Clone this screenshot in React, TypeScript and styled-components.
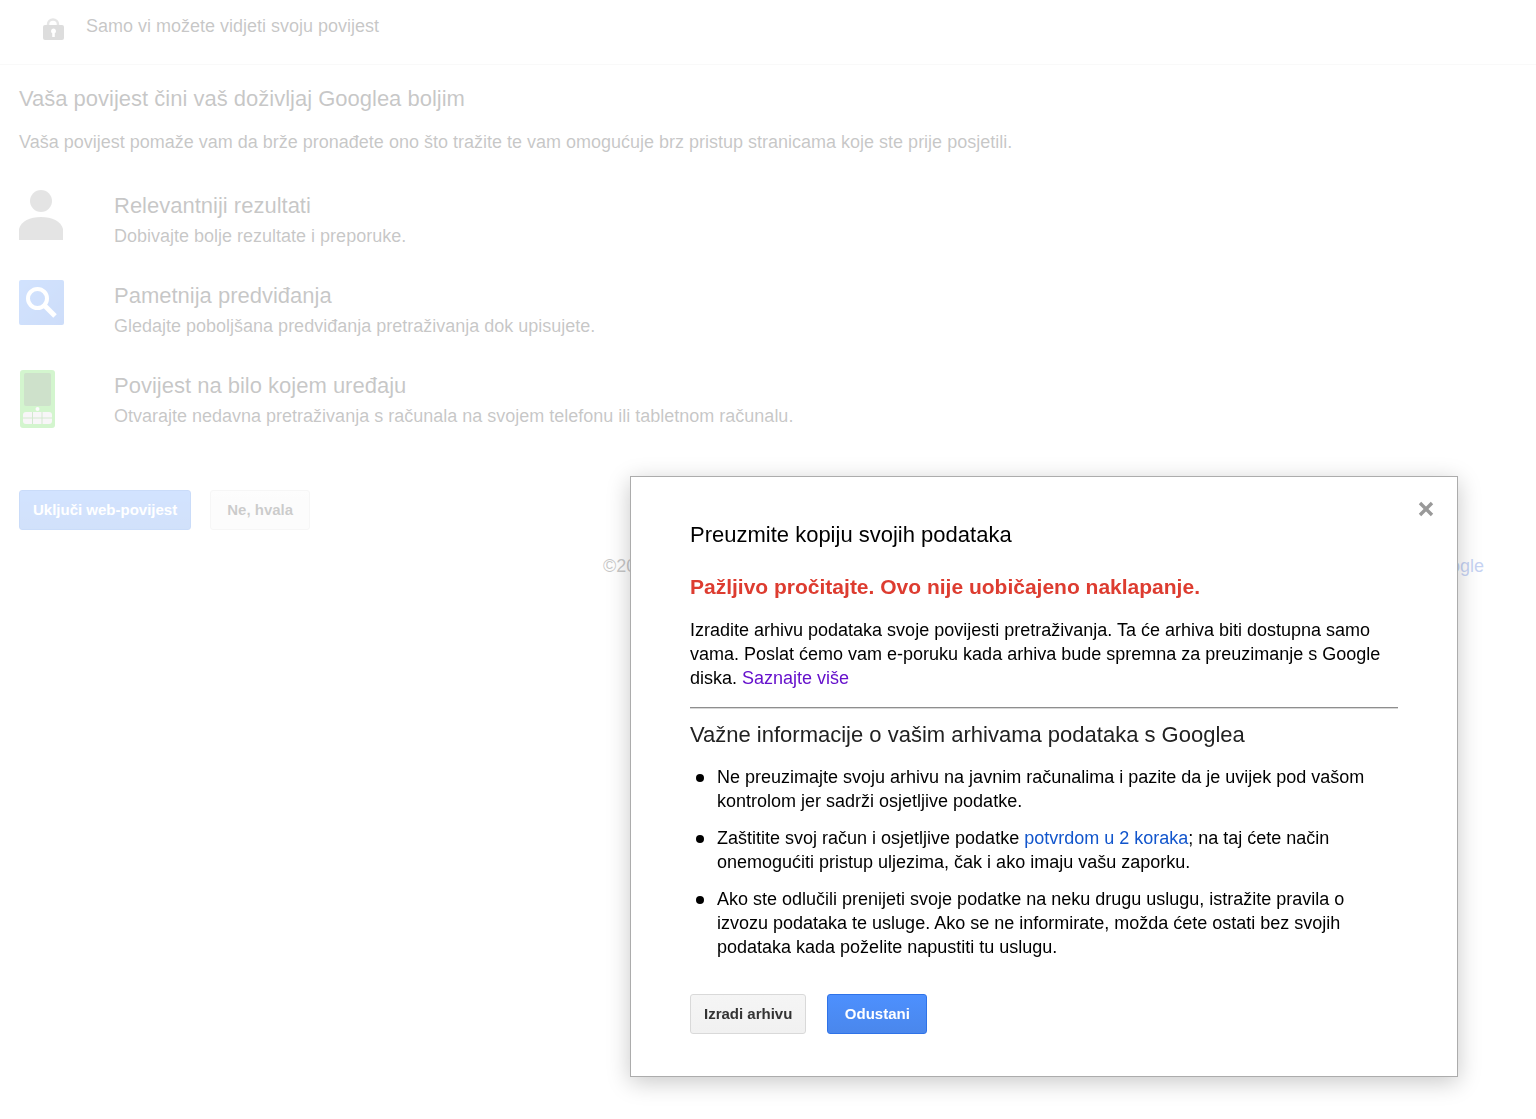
import React from "react";
import styled, { createGlobalStyle, css } from "styled-components";

const GlobalStyle = createGlobalStyle`
  *, *::before, *::after { box-sizing: border-box; }
  body {
    margin: 0;
    background: #fff;
    color: #222;
    font: 18px/24px "Liberation Sans", Arial, sans-serif;
  }
  h1, h2, h3, p, ul { margin: 0; padding: 0; font-weight: normal; }
  a { text-decoration: none; }
`;

const Page = styled.div`
  min-height: 100vh;
`;

const PrivacyBar = styled.header`
  display: flex;
  align-items: flex-start;
  gap: 22px;
  height: 65px;
  padding: 14px 42px;
  border-bottom: 1px solid #e5e5e5;
`;

const Main = styled.main`
  padding: 20px 19px 0;
`;

const Heading = styled.h1`
  font-size: 22px;
  line-height: 28px;
`;

const Intro = styled.p`
  padding: 17px 0 36px;
`;

const FeatureList = styled.ul`
  list-style: none;
`;

const Feature = styled.li`
  display: grid;
  grid-template-columns: 45px 1fr;
  column-gap: 50px;
  align-items: start;
  height: 90px;
  svg { display: block; }
`;

const FeatureTitle = styled.h2`
  font-size: 22px;
  line-height: 32px;
`;

const FeatureText = styled.p`
  line-height: 28px;
`;

const ButtonRow = styled.div<{ $gap: number; $top: number }>`
  display: flex;
  gap: ${(p) => p.$gap}px;
  margin-top: ${(p) => p.$top}px;
`;

const Button = styled.button<{ $primary?: boolean; $roomy?: boolean }>`
  height: 40px;
  min-width: 100px;
  padding: 0 ${(p) => (p.$roomy ? 15 : 13)}px;
  border: 1px solid #d9d9d9;
  border-radius: 3px;
  background: linear-gradient(#f5f5f5, #f1f1f1);
  color: #333;
  font: bold 15px/20px "Liberation Sans", Arial, sans-serif;
  cursor: pointer;
  ${(p) =>
    p.$primary &&
    css`
      border-color: #2f73e8;
      background: linear-gradient(#4d90fe, #4a87ec);
      color: #fff;
    `}
`;

const Footer = styled.footer`
  display: flex;
  justify-content: space-between;
  margin-left: 584px;
  padding: 24px 33px 0 0;
  a { color: #1a4fcf; }
`;

const Backdrop = styled.div`
  position: fixed;
  inset: 0;
  display: grid;
  place-items: end;
  padding: 42px 78px;
  background: rgba(255, 255, 255, 0.75);
`;

const Dialog = styled.section`
  position: relative;
  width: 828px;
  max-width: 100%;
  padding: 44px 59px 42px;
  border: 1px solid #acacac;
  background: #fff;
  color: #000;
  box-shadow: 0 5px 22px rgba(0, 0, 0, 0.22);
`;

const CloseButton = styled.button`
  position: absolute;
  top: 20px;
  right: 19px;
  width: 24px;
  height: 24px;
  padding: 4px;
  border: 0;
  background: none;
  cursor: pointer;
  svg { display: block; }
`;

const DialogTitle = styled.h2`
  font-size: 22px;
  line-height: 28px;
`;

const Warning = styled.p`
  padding: 26px 0 19px;
  color: #dd3c30;
  font-size: 21px;
  font-weight: bold;
`;

const Link = styled.a<{ $visited?: boolean }>`
  color: ${(p) => (p.$visited ? "#61c" : "#15c")};
`;

const Divider = styled.hr`
  height: 2px;
  margin: 17px 0 12px;
  border: 0;
  border-top: 1px solid #8e8e8e;
  border-bottom: 1px solid #d8d8d8;
`;

const SectionTitle = styled.h3`
  color: #222;
  font-size: 22px;
  line-height: 28px;
`;

const Notes = styled.ul`
  display: grid;
  gap: 13px;
  margin-top: 16px;
  list-style: none;
`;

const Note = styled.li`
  display: grid;
  grid-template-columns: 27px 1fr;
  &::before {
    content: "";
    width: 8px;
    height: 8px;
    margin: 9px 0 0 6px;
    border-radius: 50%;
    background: #000;
  }
`;

function LockIcon() {
  return (
    <svg width="22" height="26" viewBox="0 0 22 26" aria-hidden="true">
      <path d="M6 13V10.500a5 5 0 0 1 10 0V13" fill="none" stroke="#999" strokeWidth="2.500" />
      <rect x="1" y="11" width="21" height="15" rx="2" fill="#777" />
      <path d="M11.500 14.500a2.600 2.600 0 0 1 1.300 4.800V23h-2.600v-3.700a2.600 2.600 0 0 1 1.300-4.800z" fill="#fff" />
    </svg>
  );
}

function PersonIcon() {
  return (
    <svg width="44" height="50" viewBox="0 0 44 50" fill="#959595" aria-hidden="true">
      <circle cx="22" cy="11" r="11" />
      <path d="M0 50V39C2 31 11 27 22 27s20 4 22 12v11z" />
    </svg>
  );
}

function SearchIcon() {
  return (
    <svg width="45" height="45" viewBox="0 0 45 45" aria-hidden="true">
      <defs>
        <linearGradient id="searchFill" x1="0" y1="0" x2="1" y2="1">
          <stop offset="0" stopColor="#4a8dfb" />
          <stop offset="1" stopColor="#3a78e7" />
        </linearGradient>
      </defs>
      <rect width="45" height="45" rx="2" fill="url(#searchFill)" />
      <circle cx="18.500" cy="18.500" r="9.500" fill="none" stroke="#fff" strokeWidth="4" />
      <path d="M25.500 25.500L36 36" stroke="#fff" strokeWidth="5" />
    </svg>
  );
}

function PhoneIcon() {
  return (
    <svg width="36" height="58" viewBox="0 0 36 58" aria-hidden="true">
      <rect x="1" width="35" height="58" rx="3" fill="#52d53e" />
      <rect x="5" y="3" width="27" height="33" rx="2" fill="#3d8732" />
      <circle cx="18.500" cy="39" r="2" fill="#f1e9f1" />
      <rect x="4" y="42" width="29" height="12" rx="3" fill="#e3dce3" />
      <path d="M4 48h29M13.500 42v12M23 42v12" stroke="#52a845" strokeWidth="1" />
    </svg>
  );
}

const features = [
  { icon: <PersonIcon />, title: "Relevantniji rezultati", text: "Dobivajte bolje rezultate i preporuke." },
  { icon: <SearchIcon />, title: "Pametnija predviđanja", text: "Gledajte poboljšana predviđanja pretraživanja dok upisujete." },
  { icon: <PhoneIcon />, title: "Povijest na bilo kojem uređaju", text: "Otvarajte nedavna pretraživanja s računala na svojem telefonu ili tabletnom računalu." },
];

export default function App() {
  return (
    <>
      <GlobalStyle />
      <Page>
        <PrivacyBar>
          <LockIcon />
          <span>Samo vi možete vidjeti svoju povijest</span>
        </PrivacyBar>
        <Main>
          <Heading>Vaša povijest čini vaš doživljaj Googlea boljim</Heading>
          <Intro>
            Vaša povijest pomaže vam da brže pronađete ono što tražite te vam omogućuje brz pristup stranicama koje ste prije posjetili.
          </Intro>
          <FeatureList>
            {features.map((f) => (
              <Feature key={f.title}>
                {f.icon}
                <div>
                  <FeatureTitle>{f.title}</FeatureTitle>
                  <FeatureText>{f.text}</FeatureText>
                </div>
              </Feature>
            ))}
          </FeatureList>
          <ButtonRow $gap={19} $top={30}>
            <Button type="button" $primary>Uključi web-povijest</Button>
            <Button type="button" $roomy>Ne, hvala</Button>
          </ButtonRow>
          <Footer>
            <span>©2013</span>
            <a href="#google">Google</a>
          </Footer>
        </Main>
      </Page>
      <Backdrop>
        <Dialog role="dialog" aria-modal="true" aria-labelledby="dialog-title">
          <CloseButton type="button" aria-label="Zatvori">
            <svg width="16" height="16" viewBox="0 0 16 16" aria-hidden="true">
              <path d="M2 2l12 12M14 2L2 14" stroke="#999" strokeWidth="3.400" />
            </svg>
          </CloseButton>
          <DialogTitle id="dialog-title">Preuzmite kopiju svojih podataka</DialogTitle>
          <Warning>Pažljivo pročitajte. Ovo nije uobičajeno naklapanje.</Warning>
          <p>
            Izradite arhivu podataka svoje povijesti pretraživanja. Ta će arhiva biti dostupna samo vama. Poslat ćemo vam e-poruku kada arhiva bude spremna za preuzimanje s Google diska.{" "}
            <Link href="#saznajte-vise" $visited>Saznajte više</Link>
          </p>
          <Divider />
          <SectionTitle>Važne informacije o vašim arhivama podataka s Googlea</SectionTitle>
          <Notes>
            <Note>
              <span>Ne preuzimajte svoju arhivu na javnim računalima i pazite da je uvijek pod vašom kontrolom jer sadrži osjetljive podatke.</span>
            </Note>
            <Note>
              <span>
                Zaštitite svoj račun i osjetljive podatke <Link href="#potvrda">potvrdom u 2 koraka</Link>; na taj ćete način onemogućiti pristup uljezima, čak i ako imaju vašu zaporku.
              </span>
            </Note>
            <Note>
              <span>Ako ste odlučili prenijeti svoje podatke na neku drugu uslugu, istražite pravila o izvozu podataka te usluge. Ako se ne informirate, možda ćete ostati bez svojih podataka kada poželite napustiti tu uslugu.</span>
            </Note>
          </Notes>
          <ButtonRow $gap={21} $top={35}>
            <Button type="button">Izradi arhivu</Button>
            <Button type="button" $primary $roomy>Odustani</Button>
          </ButtonRow>
        </Dialog>
      </Backdrop>
    </>
  );
}
